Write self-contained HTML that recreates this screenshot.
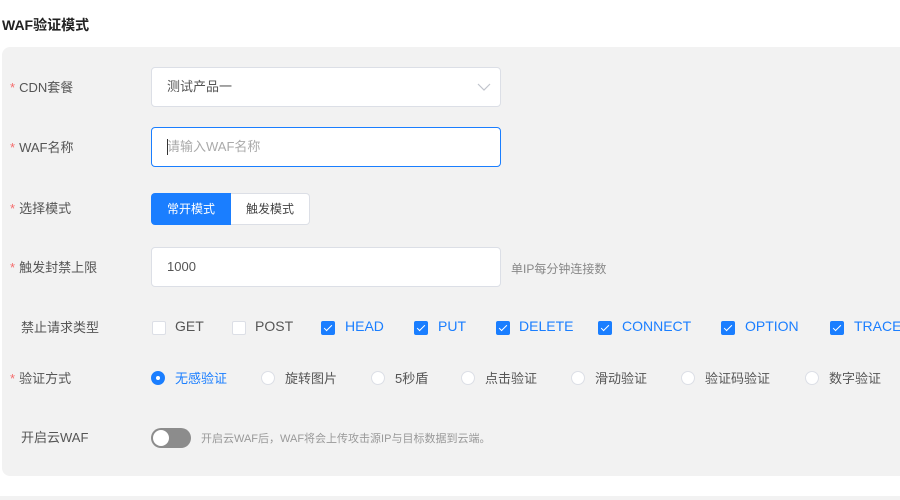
<!DOCTYPE html>
<html><head><meta charset="utf-8"><style>
*{box-sizing:border-box;margin:0;padding:0}
body{width:900px;height:500px;background:#fff;font-family:"Liberation Sans","Noto Sans CJK SC",sans-serif;font-size:13px;color:#333;position:relative;overflow:hidden}
.a{position:absolute;white-space:nowrap}
.title{left:2px;top:15px;font-weight:bold;font-size:14px;color:#222}
.panel{left:2px;top:47px;width:910px;height:429px;background:#f2f2f2;border-radius:8px}
.lbl{left:10px;color:#555;font-size:13px}
.lbl i{color:#f56c6c;font-style:normal;margin-right:4px}
.inp{left:151px;width:350px;height:40px;background:#fff;border:1px solid #dcdfe6;border-radius:4px;padding-left:15px;line-height:38px;color:#555}
.cb{width:14px;height:14px;border:1px solid #dcdfe6;background:#fff;border-radius:2px}
.cb.on{background:#1a7eff;border-color:#1a7eff}
.cb.on:after{content:"";position:absolute;left:4px;top:1px;width:3px;height:7px;border:solid #fff;border-width:0 1.5px 1.5px 0;transform:rotate(45deg)}
.ct{font-size:14px;color:#555}
.ct.on{color:#1a7eff}
.rd{width:14px;height:14px;border:1px solid #dcdfe6;border-radius:50%;background:#fff}
.rd.on{border-color:#1a7eff;background:#1a7eff}
.rd.on:after{content:"";position:absolute;left:4px;top:4px;width:4px;height:4px;border-radius:50%;background:#fff}
.rt{font-size:13px;color:#555}
</style></head><body>
<div class="a title">WAF验证模式</div>
<div class="a panel"></div>
<div class="a lbl" style="top:77px"><i>*</i>CDN套餐</div>
<div class="a inp" style="top:67px">测试产品一</div>
<svg class="a" style="left:477px;top:82px" width="14" height="10"><path d="M1 2 L7 8 L13 2" fill="none" stroke="#c0c4cc" stroke-width="1.2"/></svg>
<div class="a lbl" style="top:137px"><i>*</i>WAF名称</div>
<div class="a inp" style="top:127px;border-color:#1a7eff;color:#aaa">请输入WAF名称</div>
<div class="a" style="left:167px;top:139px;width:1px;height:16px;background:#333"></div>
<div class="a lbl" style="top:198px"><i>*</i>选择模式</div>
<div class="a" style="left:151px;top:193px;width:80px;height:32px;background:#1a7eff;color:#fff;border-radius:4px 0 0 4px;text-align:center;line-height:32px;font-size:12px">常开模式</div>
<div class="a" style="left:231px;top:193px;width:79px;height:32px;background:#fff;border:1px solid #dcdfe6;border-left:none;border-radius:0 4px 4px 0;text-align:center;line-height:30px;font-size:12px;color:#444">触发模式</div>
<div class="a lbl" style="top:257px"><i>*</i>触发封禁上限</div>
<div class="a inp" style="top:247px">1000</div>
<div class="a" style="left:511px;top:260px;font-size:12px;color:#888">单IP每分钟连接数</div>
<div class="a lbl" style="top:317px;left:21px">禁止请求类型</div>
<div class="a cb" style="left:152px;top:321px"></div><div class="a ct" style="left:175px;top:318px">GET</div>
<div class="a cb" style="left:232px;top:321px"></div><div class="a ct" style="left:255px;top:318px">POST</div>
<div class="a cb on" style="left:321px;top:321px"></div><div class="a ct on" style="left:345px;top:318px">HEAD</div>
<div class="a cb on" style="left:414px;top:321px"></div><div class="a ct on" style="left:438px;top:318px">PUT</div>
<div class="a cb on" style="left:496px;top:321px"></div><div class="a ct on" style="left:519px;top:318px">DELETE</div>
<div class="a cb on" style="left:598px;top:321px"></div><div class="a ct on" style="left:622px;top:318px">CONNECT</div>
<div class="a cb on" style="left:721px;top:321px"></div><div class="a ct on" style="left:745px;top:318px">OPTION</div>
<div class="a cb on" style="left:830px;top:321px"></div><div class="a ct on" style="left:854px;top:318px">TRACE</div>
<div class="a lbl" style="top:368px"><i>*</i>验证方式</div>
<div class="a rd on" style="left:151px;top:371px"></div><div class="a rt" style="left:175px;top:368px;color:#1a7eff">无感验证</div>
<div class="a rd" style="left:261px;top:371px"></div><div class="a rt" style="left:285px;top:368px">旋转图片</div>
<div class="a rd" style="left:371px;top:371px"></div><div class="a rt" style="left:395px;top:368px">5秒盾</div>
<div class="a rd" style="left:461px;top:371px"></div><div class="a rt" style="left:485px;top:368px">点击验证</div>
<div class="a rd" style="left:571px;top:371px"></div><div class="a rt" style="left:595px;top:368px">滑动验证</div>
<div class="a rd" style="left:681px;top:371px"></div><div class="a rt" style="left:705px;top:368px">验证码验证</div>
<div class="a rd" style="left:805px;top:371px"></div><div class="a rt" style="left:829px;top:368px">数字验证</div>
<div class="a lbl" style="top:427px;left:21px">开启云WAF</div>
<div class="a" style="left:151px;top:428px;width:40px;height:20px;border-radius:10px;background:#8c8c8c"></div>
<div class="a" style="left:153px;top:430px;width:16px;height:16px;border-radius:50%;background:#fff"></div>
<div class="a" style="left:201px;top:430px;font-size:11px;color:#999">开启云WAF后，WAF将会上传攻击源IP与目标数据到云端。</div>
<div class="a" style="left:0;top:496px;width:900px;height:4px;background:#f2f2f2"></div>
</body></html>
